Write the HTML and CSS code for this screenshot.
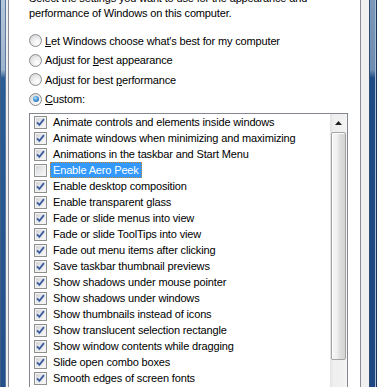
FILE: index.html
```html
<!DOCTYPE html>
<html lang="en">
<head>
    <meta charset="UTF-8">
    <title>Performance Options</title>
    <link rel="stylesheet" href="styles.css">
</head>
<body>
    <svg class="defs" width="0" height="0">
        <symbol id="tick" viewBox="0 0 9 9">
            <path d="M1 4.3 L3.4 6.8 L8 1.2" fill="none" stroke="#3d5da0" stroke-width="1.9"/>
        </symbol>
    </svg>

    <div class="window">
        <div class="frame frame-left"></div>
        <div class="dialog">
            <div class="tab-page">
                <p class="intro">Select the settings you want to use for the appearance and<br>performance of Windows on this computer.</p>

                <div class="options">
                    <label class="radio"><span class="radio-btn"></span><span><u>L</u>et Windows choose what's best for my computer</span></label>
                    <label class="radio"><span class="radio-btn"></span><span>Adjust for <u>b</u>est appearance</span></label>
                    <label class="radio"><span class="radio-btn"></span><span>Adjust for best <u>p</u>erformance</span></label>
                    <label class="radio"><span class="radio-btn on"></span><span><u>C</u>ustom:</span></label>
                </div>

                <div class="listbox">
                    <ul class="items">
                        <li><span class="check"><svg><use href="#tick"/></svg></span><span class="text">Animate controls and elements inside windows</span></li>
                        <li><span class="check"><svg><use href="#tick"/></svg></span><span class="text">Animate windows when minimizing and maximizing</span></li>
                        <li><span class="check"><svg><use href="#tick"/></svg></span><span class="text">Animations in the taskbar and Start Menu</span></li>
                        <li><span class="check"></span><span class="text selected">Enable Aero Peek</span></li>
                        <li><span class="check"><svg><use href="#tick"/></svg></span><span class="text">Enable desktop composition</span></li>
                        <li><span class="check"><svg><use href="#tick"/></svg></span><span class="text">Enable transparent glass</span></li>
                        <li><span class="check"><svg><use href="#tick"/></svg></span><span class="text">Fade or slide menus into view</span></li>
                        <li><span class="check"><svg><use href="#tick"/></svg></span><span class="text">Fade or slide ToolTips into view</span></li>
                        <li><span class="check"><svg><use href="#tick"/></svg></span><span class="text">Fade out menu items after clicking</span></li>
                        <li><span class="check"><svg><use href="#tick"/></svg></span><span class="text">Save taskbar thumbnail previews</span></li>
                        <li><span class="check"><svg><use href="#tick"/></svg></span><span class="text">Show shadows under mouse pointer</span></li>
                        <li><span class="check"><svg><use href="#tick"/></svg></span><span class="text">Show shadows under windows</span></li>
                        <li><span class="check"><svg><use href="#tick"/></svg></span><span class="text">Show thumbnails instead of icons</span></li>
                        <li><span class="check"><svg><use href="#tick"/></svg></span><span class="text">Show translucent selection rectangle</span></li>
                        <li><span class="check"><svg><use href="#tick"/></svg></span><span class="text">Show window contents while dragging</span></li>
                        <li><span class="check"><svg><use href="#tick"/></svg></span><span class="text">Slide open combo boxes</span></li>
                        <li><span class="check"><svg><use href="#tick"/></svg></span><span class="text">Smooth edges of screen fonts</span></li>
                        <li><span class="check"><svg><use href="#tick"/></svg></span><span class="text">Smooth-scroll list boxes</span></li>
                    </ul>
                    <div class="scrollbar">
                        <div class="arrow-up"><svg width="7" height="4"><path d="M3.5 0 L7 4 H0 Z" fill="#222"/></svg></div>
                        <div class="thumb"></div>
                    </div>
                </div>
            </div>
        </div>
        <div class="frame frame-right"></div>
    </div>
</body>
</html>
```

FILE: styles.css
```css
* {
    box-sizing: border-box;
}

body {
    margin: 0;
    font-family: "Liberation Sans", Arial, sans-serif;
    font-size: 11px;
    letter-spacing: -0.15px;
    color: #000;
    overflow: hidden;
}

.defs {
    position: absolute;
}

.window {
    display: flex;
    width: 377px;
    height: 387px;
    overflow: hidden;
}

/* Aero glass frame */
.frame-left {
    width: 6px;
    border-left: 1px solid #3d5d86;
    border-right: 1px solid #5d7aa0;
    background: linear-gradient(to bottom, #b4c6da 0, #9fb5cd 70px, #2b5c96 78px, #22508a 100%);
}

.frame-right {
    width: 8px;
    border-left: 1px solid #2e4d77;
    border-right: 1px solid #17345a;
    box-shadow: inset -1px 0 #a9bfd8;
    background: linear-gradient(to bottom, #7d98b8 0, #6f8db0 70px, #1f4b84 78px, #1c4780 100%);
}

.dialog {
    flex: 1;
    display: flex;
    background-color: #f0f0f0;
    padding: 0 8px 0 2px;
}

.tab-page {
    flex: 1;
    background-color: #fff;
    border-left: 1px solid #898c95;
    border-right: 1px solid #898c95;
    padding: 0 12px 0 20px;
}

.intro {
    margin: -9px 0 0;
    line-height: 15px;
}

.options {
    margin-top: 10px;
}

.radio {
    display: flex;
    align-items: center;
    height: 19.5px;
}

.radio-btn {
    position: relative;
    width: 13px;
    height: 13px;
    margin-right: 3px;
    border-radius: 50%;
    border: 1px solid #8b8d90;
    background: radial-gradient(circle at 65% 70%, #ffffff 0, #ececec 45%, #c9cbcf 100%);
}

.radio-btn.on::after {
    content: "";
    position: absolute;
    left: 2.5px;
    top: 2.5px;
    width: 6px;
    height: 6px;
    border-radius: 50%;
    background: radial-gradient(circle at 40% 35%, #b7e3fb 0, #3c8fd6 50%, #1a4f8e 100%);
}

.listbox {
    display: flex;
    height: 290px;
    margin-top: 4px;
    border: 1px solid #828790;
    overflow: hidden;
}

.items {
    flex: 1;
    list-style-type: none;
    margin: 0;
    padding: 0 0 0 4px;
}

.items li {
    display: flex;
    align-items: center;
    height: 16px;
}

.check {
    display: flex;
    align-items: center;
    justify-content: center;
    width: 13px;
    height: 13px;
    margin-right: 3px;
    border: 1px solid #8e8f8f;
    background: linear-gradient(135deg, #c9ccd1 0, #e6e7e9 45%, #f9f9f9 100%);
    box-shadow: inset 0 0 0 1px #f4f4f4;
}

.check svg {
    width: 9px;
    height: 9px;
}

.text {
    padding: 0 2px;
    line-height: 14px;
    border: 1px solid transparent;
}

.text.selected {
    background-color: #3399ff;
    color: #fff;
    border: 1px dotted #c8862e;
}

/* vertical scrollbar */
.scrollbar {
    width: 17px;
    background: linear-gradient(to right, #e3e3e3 0, #efefef 20%, #f1f1f1 80%, #f6f6f6 100%);
}

.arrow-up {
    display: flex;
    align-items: center;
    justify-content: center;
    height: 17px;
}

.thumb {
    height: 228px;
    margin: 1px 1px 0;
    border: 1px solid #a3a3a3;
    border-radius: 2px;
    background: linear-gradient(to right, #f6f6f6 0, #efefef 40%, #dedede 60%, #d4d4d4 100%);
    box-shadow: inset 1px 1px #fff;
}
```
